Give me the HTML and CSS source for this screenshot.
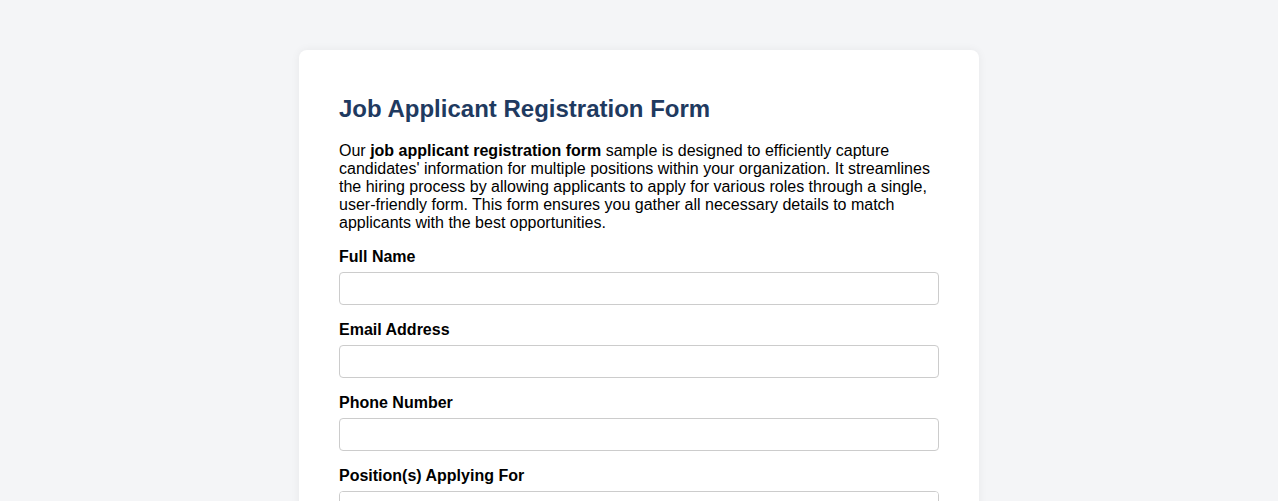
FILE: index.html
```html
<!DOCTYPE html>
<html lang="en">
<head>
<meta charset="utf-8">
<title>Job Applicant Registration Form</title>
<link rel="stylesheet" href="styles.css">
</head>
<body>
<div class="page">
  <form class="card">
    <h1 class="title">Job Applicant Registration Form</h1>
    <p class="intro">Our <strong>job applicant registration form</strong> sample is designed to efficiently capture candidates' information for multiple positions within your organization. It streamlines the hiring process by allowing applicants to apply for various roles through a single, user-friendly form. This form ensures you gather all necessary details to match applicants with the best opportunities.</p>
    <div class="group">
      <label class="label" for="name">Full Name</label>
      <input class="field" id="name" type="text">
    </div>
    <div class="group">
      <label class="label" for="email">Email Address</label>
      <input class="field" id="email" type="email">
    </div>
    <div class="group">
      <label class="label" for="phone">Phone Number</label>
      <input class="field" id="phone" type="tel">
    </div>
    <div class="group">
      <label class="label" for="pos">Position(s) Applying For</label>
      <select class="field multi" id="pos" multiple>
        <option>Software Engineer</option>
        <option>Product Manager</option>
        <option>Designer</option>
        <option>Data Analyst</option>
        <option>Marketing Specialist</option>
        <option>Sales Representative</option>
      </select>
    </div>
  </form>
</div>
</body>
</html>
```
FILE: styles.css
```css
html, body {
  margin: 0;
  padding: 0;
}
body {
  background: #f4f5f7;
  font-family: "Liberation Sans", Arial, sans-serif;
  color: #000;
}
.page {
  display: flex;
  justify-content: center;
  padding-top: 50px;
}
.card {
  width: 600px;
  background: #fff;
  border-radius: 8px;
  padding: 45px 40px 40px;
  box-shadow: 0 0 10px rgba(0, 0, 0, 0.06);
}
.title {
  margin: 0 0 19px;
  font-size: 24px;
  font-weight: bold;
  color: #1f3a60;
  line-height: 28px;
}
.intro {
  margin: 0 0 16px;
  font-size: 16px;
  line-height: 18px;
}
.group {
  margin-bottom: 16px;
}
.label {
  display: block;
  font-weight: bold;
  font-size: 16px;
  line-height: 18px;
  margin-bottom: 6px;
}
.field {
  display: block;
  width: 100%;
  height: 33px;
  box-sizing: border-box;
  border: 1px solid #ccc;
  border-radius: 4px;
  padding: 6px 8px;
  font-family: inherit;
  font-size: 16px;
  background: #fff;
}
.multi {
  height: 90px;
  color: transparent;
}
```
